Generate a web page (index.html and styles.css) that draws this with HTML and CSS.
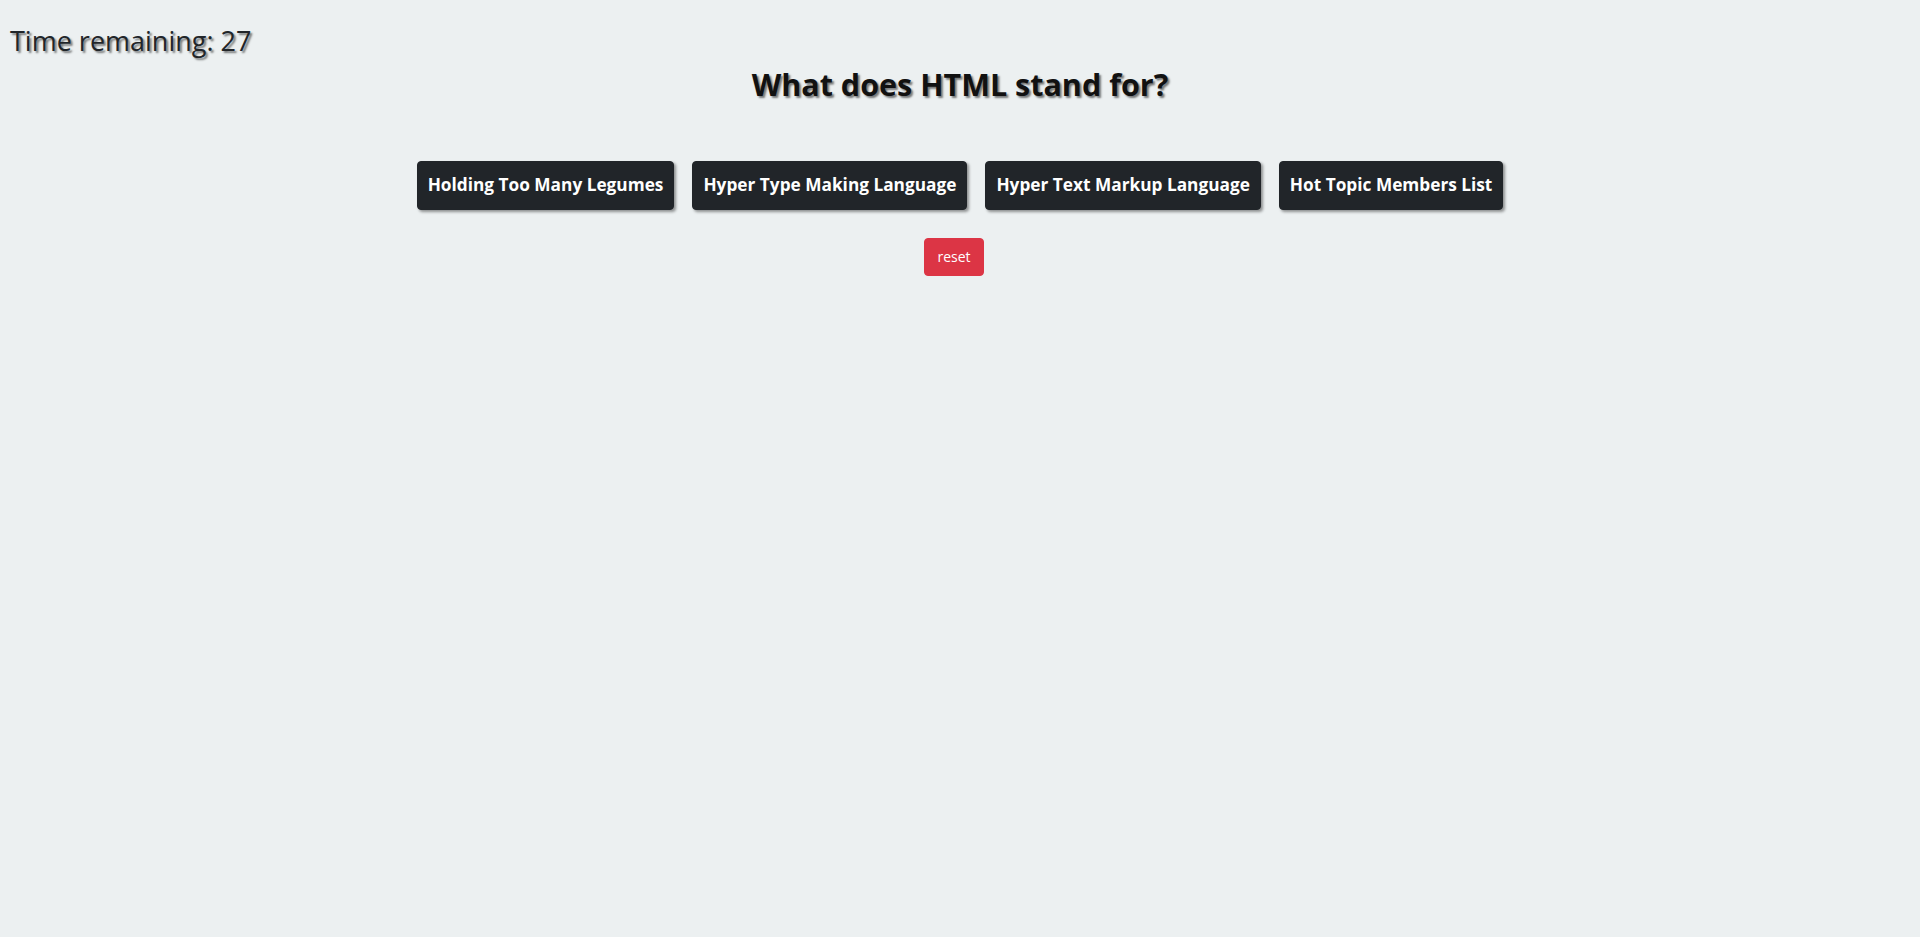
FILE: index.html
```html
<!DOCTYPE html>
<html lang="en">
<head>
<meta charset="utf-8">
<title>Quiz</title>
<link rel="stylesheet" href="styles.css">
</head>
<body>
  <div class="app">
    <h4 class="timer">Time remaining: 27</h4>
    <h3 class="question">What does HTML stand for?</h3>
    <div class="answers">
      <button class="answer">Holding Too Many Legumes</button>
      <button class="answer">Hyper Type Making Language</button>
      <button class="answer">Hyper Text Markup Language</button>
      <button class="answer">Hot Topic Members List</button>
    </div>
    <div class="controls">
      <button class="reset">reset</button>
    </div>
  </div>
</body>
</html>
```

FILE: styles.css
```css
html, body {
  margin: 0;
  padding: 0;
}
body {
  background: #ecf0f1;
  font-family: "Open Sans", "Noto Sans", sans-serif;
  color: #212529;
  min-height: 937px;
}
.app {
  display: flex;
  flex-direction: column;
}
.timer {
  margin: 25px 0 0 0;
  padding-left: 10px;
  font-size: 27px;
  font-weight: 500;
  line-height: 1.2;
  color: #212529;
  text-shadow: 2px 2px 2px rgba(0, 0, 0, 0.5);
}
.question {
  margin: 9px 0 0 0;
  text-align: center;
  font-size: 30.5px;
  font-weight: 700;
  line-height: 1.2;
  color: #111;
  text-shadow: 2px 2px 2px rgba(0, 0, 0, 0.5);
}
.answers {
  display: flex;
  justify-content: center;
  gap: 18px;
  margin-top: 58px;
}
.answer {
  background: #212529;
  color: #fff;
  border: 1px solid #212529;
  border-radius: 4px;
  font-family: inherit;
  font-size: 17.25px;
  font-weight: 700;
  line-height: 24px;
  padding: 0 10px;
  height: 49px;
  box-shadow: 2px 2px 3px rgba(0, 0, 0, 0.4);
  cursor: pointer;
}
.controls {
  display: flex;
  justify-content: center;
  margin-top: 28px;
}
.reset {
  background: #dc3545;
  color: #fff;
  border: 1px solid #dc3545;
  border-radius: 4px;
  font-family: inherit;
  font-size: 14px;
  font-weight: 400;
  line-height: 24px;
  padding: 6px 12px;
  height: 38px;
  margin-right: 12px;
  cursor: pointer;
}
```
